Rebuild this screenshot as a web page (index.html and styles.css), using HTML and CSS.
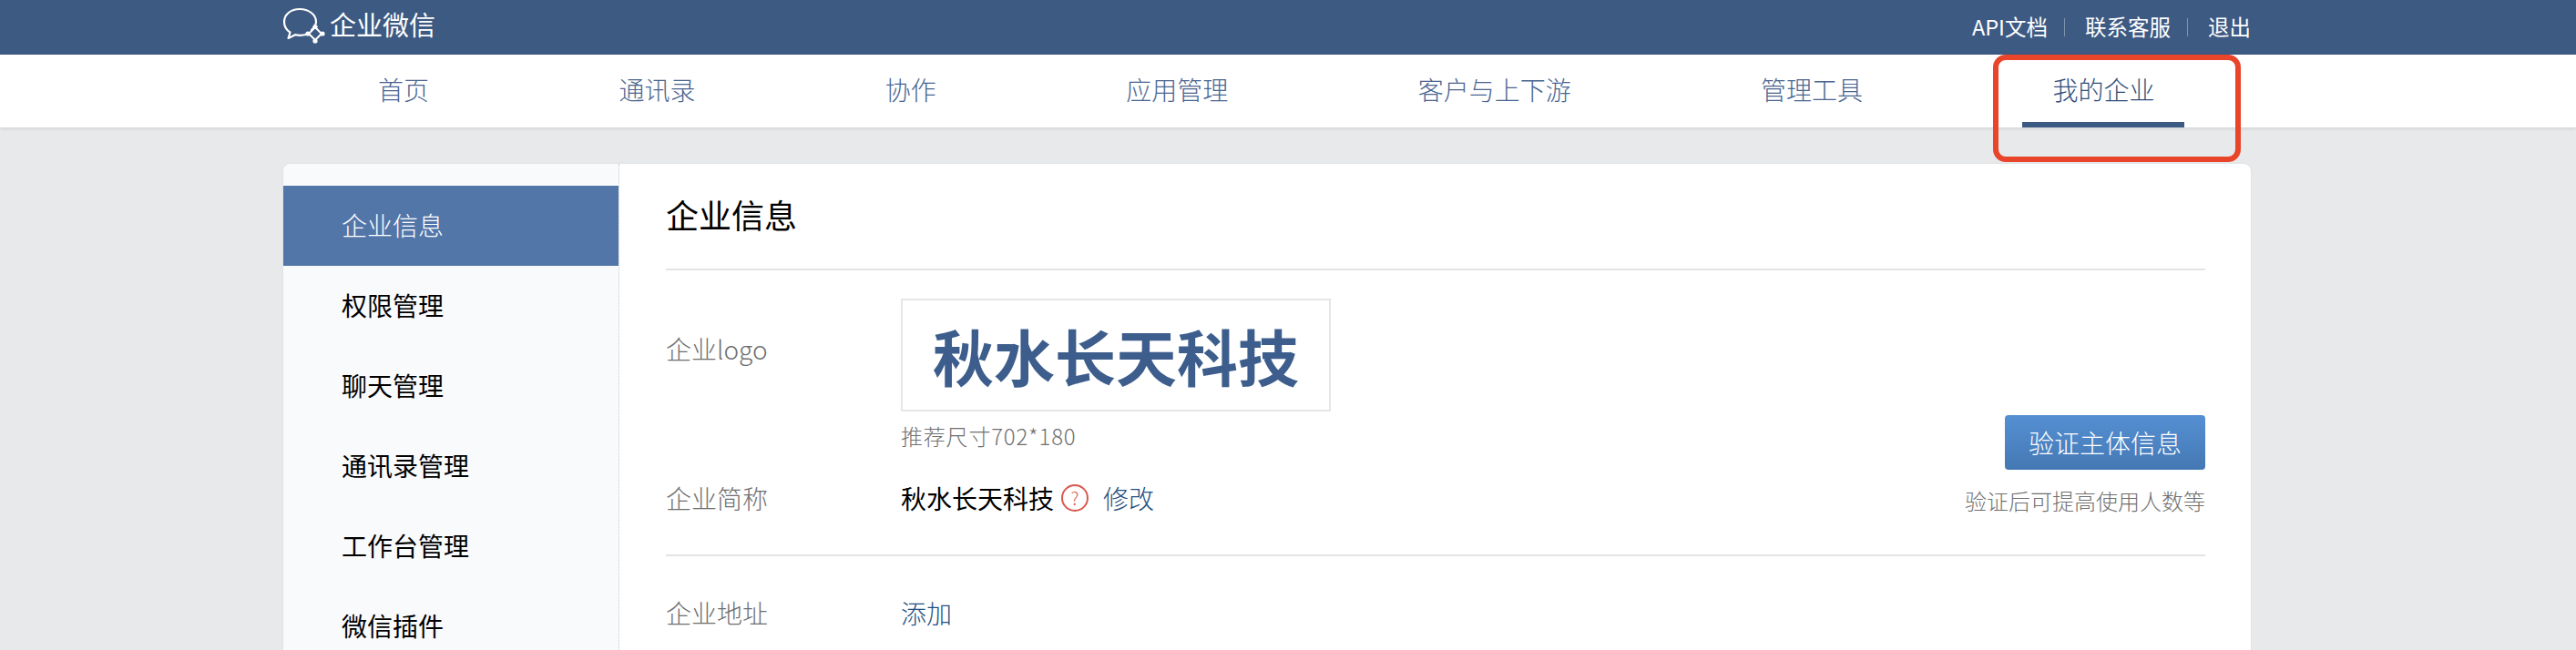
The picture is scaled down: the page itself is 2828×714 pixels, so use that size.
FILE: index.html
```html
<!DOCTYPE html>
<html lang="zh-CN">
<head>
<meta charset="utf-8">
<title>企业微信</title>
<link rel="stylesheet" href="styles.css">
</head>
<body>
<header class="topbar">
  <div class="wrap topbar-in">
    <div class="brand">
      <svg class="brand-icon" width="46" height="40" viewBox="0 0 46 40" fill="none">
        <path d="M31 24C34 21 36 18.500 36 15C36 7 28 1 18 1C8 1 1 7 1 15C1 20 3.500 24 7.500 26.500L5.500 33L13 29.200C16 29.800 21 30 25 29" stroke="#fff" stroke-width="2.200" stroke-linejoin="round" stroke-linecap="round"/>
        <path d="M35 21L42 28L35 35L28 28Z" stroke="#fff" stroke-width="2"/>
        <circle cx="35" cy="20.500" r="2.600" fill="#fff"/>
        <circle cx="43" cy="28" r="2.600" fill="#fff"/>
        <circle cx="35" cy="36" r="2.600" fill="#fff"/>
        <circle cx="27" cy="28" r="2.600" fill="#fff"/>
      </svg>
      <span class="brand-name">企业微信</span>
    </div>
    <nav class="toplinks">
      <a>API文档</a><i class="sep"></i><a>联系客服</a><i class="sep"></i><a>退出</a>
    </nav>
  </div>
</header>
<nav class="mainnav">
  <div class="wrap mainnav-in">
    <a class="tab">首页</a>
    <a class="tab">通讯录</a>
    <a class="tab">协作</a>
    <a class="tab">应用管理</a>
    <a class="tab">客户与上下游</a>
    <a class="tab">管理工具</a>
    <a class="tab tab-on">我的企业</a>
  </div>
</nav>
<div class="callout"></div>
<main class="wrap card">
  <aside class="side">
    <a class="side-item side-on">企业信息</a>
    <a class="side-item">权限管理</a>
    <a class="side-item">聊天管理</a>
    <a class="side-item">通讯录管理</a>
    <a class="side-item">工作台管理</a>
    <a class="side-item">微信插件</a>
  </aside>
  <section class="content">
    <h1 class="title">企业信息</h1>
    <div class="group">
      <div class="group-main">
        <div class="row row-logo">
          <div class="label">企业logo</div>
          <div class="value">
            <div class="logo-box">秋水长天科技</div>
            <div class="hint">推荐尺寸702*180</div>
          </div>
        </div>
        <div class="row row-name">
          <div class="label">企业简称</div>
          <div class="value name-line">
            <span>秋水长天科技</span>
            <span class="help">?</span>
            <a class="link">修改</a>
          </div>
        </div>
      </div>
      <div class="group-side">
        <button class="btn">验证主体信息</button>
        <div class="btn-hint">验证后可提高使用人数等</div>
      </div>
    </div>
    <div class="row row-addr">
      <div class="label">企业地址</div>
      <div class="value"><a class="link">添加</a></div>
    </div>
  </section>
</main>
</body>
</html>
```
FILE: styles.css
```css
* { box-sizing: border-box; }
html, body { margin: 0; padding: 0; }
body {
  position: relative;
  height: 714px;
  overflow: hidden;
  background: #e8e9eb;
  font-family: "Noto Sans CJK SC", "Liberation Sans", sans-serif;
  color: #000;
}
.wrap { width: 2160px; margin-left: 311px; }
.topbar { height: 60px; background: #3d5a83; color: #fff; }
.topbar-in { height: 60px; display: flex; justify-content: space-between; align-items: center; }
.brand { display: flex; align-items: flex-start; gap: 5px; height: 42px; margin-top: -6px; }
.brand-icon { display: block; flex: none; margin-top: 3px; overflow: visible; }
.brand-name { font-size: 29px; line-height: 40px; }
.toplinks { display: flex; align-items: center; font-size: 23.500px; line-height: 34px; margin-top: -2px; }
.sep { width: 1px; height: 20px; margin: 2px 22px 0 18px; background: #7f93ad; }
.mainnav { height: 80px; background: #fff; box-shadow: 0 1px 4px rgba(0,0,0,.12); }
.mainnav-in { height: 80px; display: flex; padding-left: 71px; gap: 142.400px; }
.tab {
  height: 80px;
  padding: 0 33px;
  font-size: 28px;
  font-weight: 300;
  line-height: 76px;
  color: #4a6690;
  white-space: nowrap;
}
.tab-on { color: #2f4d7a; border-bottom: 6px solid #3d5a83; }
.callout {
  position: absolute;
  left: 2188px;
  top: 60px;
  width: 272px;
  height: 118px;
  border: 6px solid #e8452a;
  border-radius: 14px;
  z-index: 2;
}
.card {
  margin-top: 40px;
  display: flex;
  height: 600px;
  background: #fff;
  border-radius: 8px 8px 0 0;
  overflow: hidden;
  box-shadow: 0 0 3px rgba(0,0,0,.06);
}
.side {
  flex: none;
  width: 369px;
  padding-top: 24px;
  background: #f9fafc;
  border-right: 1px dotted #c9ccd2;
}
.side-item {
  display: block;
  height: 88px;
  padding-left: 64px;
  font-size: 28px;
  line-height: 86px;
}
.side-on { background: #5376a9; color: #fff; font-weight: 300; }
.content { flex: 1; padding: 0 50px 0 51px; min-width: 0; }
.title {
  margin: 0;
  height: 117px;
  font-size: 36px;
  font-weight: 400;
  line-height: 56px;
  padding-top: 27px;
  border-bottom: 2px solid #e4e4e4;
}
.group {
  display: flex;
  justify-content: space-between;
  height: 314px;
  border-bottom: 2px solid #e4e4e4;
}
.row { display: flex; }
.label { flex: none; width: 258px; font-size: 28px; font-weight: 300; color: #6f6f6f; }
.value { font-size: 28px; }
.row-logo { padding-top: 31px; }
.row-logo .label { padding-top: 36px; line-height: 38px; }
.logo-box {
  width: 472px;
  height: 124px;
  border: 2px solid #e6e6e6;
  font-size: 67px;
  font-weight: 700;
  line-height: 120px;
  text-align: center;
  color: #3d5e8c;
  white-space: nowrap;
}
.hint { margin-top: 10px; font-size: 24px; font-weight: 300; letter-spacing: .8px; line-height: 34px; color: #6f6f6f; }
.row-name { margin-top: 31px; align-items: center; }
.name-line { display: flex; align-items: center; line-height: 40px; }
.help {
  width: 30px;
  height: 30px;
  margin-left: 8px;
  border: 2px solid #d9584e;
  border-radius: 50%;
  font-size: 20px;
  font-weight: 300;
  line-height: 25px;
  text-align: center;
  color: #d9584e;
}
.link { margin-left: 16px; color: #234f80; font-weight: 300; }
.group-side { padding-top: 159px; display: flex; flex-direction: column; align-items: flex-end; }
.btn {
  width: 220px;
  height: 60px;
  padding: 0;
  border: 0;
  border-radius: 4px;
  background: linear-gradient(#5590d3, #4478b4);
  color: #fff;
  font: inherit;
  font-size: 28px;
  font-weight: 300;
}
.btn-hint { margin-top: 17px; font-size: 24px; font-weight: 300; line-height: 34px; color: #6f6f6f; }
.row-addr { padding-top: 42px; line-height: 40px; }
.row-addr .link { margin-left: 0; }
```
